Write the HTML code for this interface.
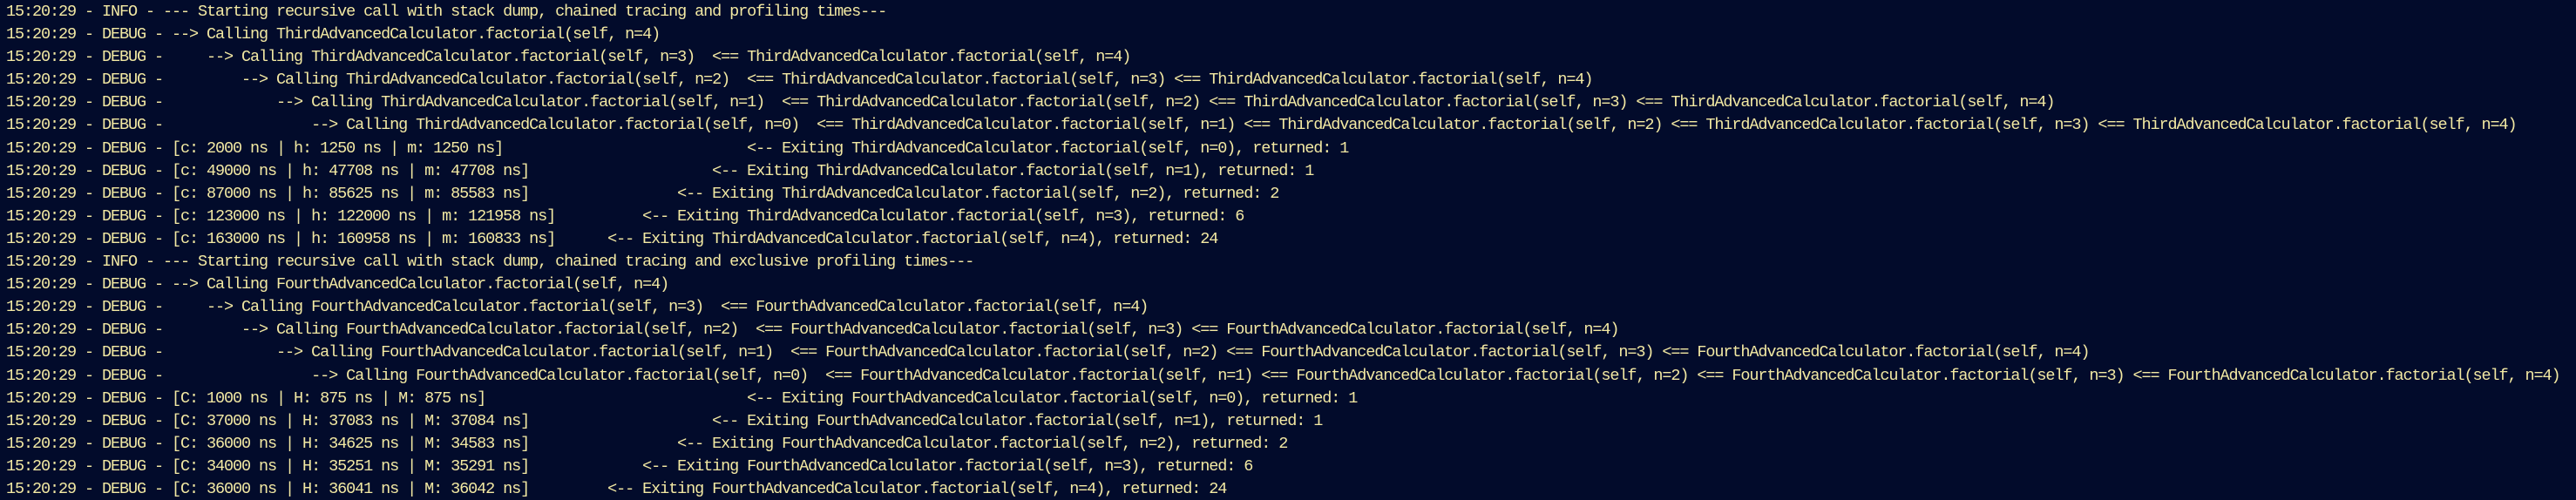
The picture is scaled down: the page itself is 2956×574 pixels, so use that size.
<!DOCTYPE html>
<html><head><meta charset="utf-8"><style>
html,body{margin:0;padding:0;background:#020b2b;width:2956px;height:574px;overflow:hidden}
pre{margin:0;padding:1px 0 0 7px;font-family:"Liberation Mono",monospace;font-size:18.5px;letter-spacing:-1.1px;line-height:26.1px;color:#f3e9a3;white-space:pre}
</style></head><body><pre>15:20:29 - INFO - --- Starting recursive call with stack dump, chained tracing and profiling times---
15:20:29 - DEBUG - --> Calling ThirdAdvancedCalculator.factorial(self, n=4)
15:20:29 - DEBUG -     --> Calling ThirdAdvancedCalculator.factorial(self, n=3)  &lt;== ThirdAdvancedCalculator.factorial(self, n=4)
15:20:29 - DEBUG -         --> Calling ThirdAdvancedCalculator.factorial(self, n=2)  &lt;== ThirdAdvancedCalculator.factorial(self, n=3) &lt;== ThirdAdvancedCalculator.factorial(self, n=4)
15:20:29 - DEBUG -             --> Calling ThirdAdvancedCalculator.factorial(self, n=1)  &lt;== ThirdAdvancedCalculator.factorial(self, n=2) &lt;== ThirdAdvancedCalculator.factorial(self, n=3) &lt;== ThirdAdvancedCalculator.factorial(self, n=4)
15:20:29 - DEBUG -                 --> Calling ThirdAdvancedCalculator.factorial(self, n=0)  &lt;== ThirdAdvancedCalculator.factorial(self, n=1) &lt;== ThirdAdvancedCalculator.factorial(self, n=2) &lt;== ThirdAdvancedCalculator.factorial(self, n=3) &lt;== ThirdAdvancedCalculator.factorial(self, n=4)
15:20:29 - DEBUG - [c: 2000 ns | h: 1250 ns | m: 1250 ns]                            &lt;-- Exiting ThirdAdvancedCalculator.factorial(self, n=0), returned: 1
15:20:29 - DEBUG - [c: 49000 ns | h: 47708 ns | m: 47708 ns]                     &lt;-- Exiting ThirdAdvancedCalculator.factorial(self, n=1), returned: 1
15:20:29 - DEBUG - [c: 87000 ns | h: 85625 ns | m: 85583 ns]                 &lt;-- Exiting ThirdAdvancedCalculator.factorial(self, n=2), returned: 2
15:20:29 - DEBUG - [c: 123000 ns | h: 122000 ns | m: 121958 ns]          &lt;-- Exiting ThirdAdvancedCalculator.factorial(self, n=3), returned: 6
15:20:29 - DEBUG - [c: 163000 ns | h: 160958 ns | m: 160833 ns]      &lt;-- Exiting ThirdAdvancedCalculator.factorial(self, n=4), returned: 24
15:20:29 - INFO - --- Starting recursive call with stack dump, chained tracing and exclusive profiling times---
15:20:29 - DEBUG - --> Calling FourthAdvancedCalculator.factorial(self, n=4)
15:20:29 - DEBUG -     --> Calling FourthAdvancedCalculator.factorial(self, n=3)  &lt;== FourthAdvancedCalculator.factorial(self, n=4)
15:20:29 - DEBUG -         --> Calling FourthAdvancedCalculator.factorial(self, n=2)  &lt;== FourthAdvancedCalculator.factorial(self, n=3) &lt;== FourthAdvancedCalculator.factorial(self, n=4)
15:20:29 - DEBUG -             --> Calling FourthAdvancedCalculator.factorial(self, n=1)  &lt;== FourthAdvancedCalculator.factorial(self, n=2) &lt;== FourthAdvancedCalculator.factorial(self, n=3) &lt;== FourthAdvancedCalculator.factorial(self, n=4)
15:20:29 - DEBUG -                 --> Calling FourthAdvancedCalculator.factorial(self, n=0)  &lt;== FourthAdvancedCalculator.factorial(self, n=1) &lt;== FourthAdvancedCalculator.factorial(self, n=2) &lt;== FourthAdvancedCalculator.factorial(self, n=3) &lt;== FourthAdvancedCalculator.factorial(self, n=4)
15:20:29 - DEBUG - [C: 1000 ns | H: 875 ns | M: 875 ns]                              &lt;-- Exiting FourthAdvancedCalculator.factorial(self, n=0), returned: 1
15:20:29 - DEBUG - [C: 37000 ns | H: 37083 ns | M: 37084 ns]                     &lt;-- Exiting FourthAdvancedCalculator.factorial(self, n=1), returned: 1
15:20:29 - DEBUG - [C: 36000 ns | H: 34625 ns | M: 34583 ns]                 &lt;-- Exiting FourthAdvancedCalculator.factorial(self, n=2), returned: 2
15:20:29 - DEBUG - [C: 34000 ns | H: 35251 ns | M: 35291 ns]             &lt;-- Exiting FourthAdvancedCalculator.factorial(self, n=3), returned: 6
15:20:29 - DEBUG - [C: 36000 ns | H: 36041 ns | M: 36042 ns]         &lt;-- Exiting FourthAdvancedCalculator.factorial(self, n=4), returned: 24</pre></body></html>
